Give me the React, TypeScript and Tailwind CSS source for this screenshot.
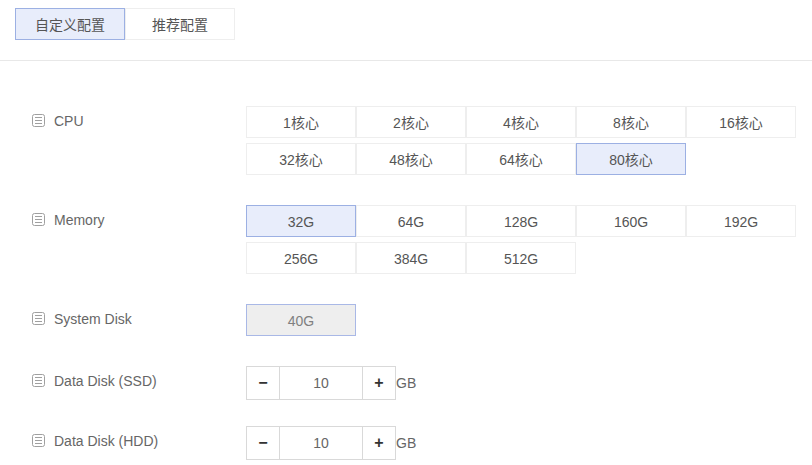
const FONT = "font-['Liberation_Sans','Noto_Sans_CJK_SC',sans-serif]"

function RowIcon() {
  return (
    <svg width="14" height="14" viewBox="0 0 14 14" fill="none" className="shrink-0">
      <rect x="0.5" y="0.5" width="12" height="12" rx="2" stroke="#a0a0a0" />
      <path d="M3 3.5h7M3 6.5h7M3 9.5h7" stroke="#a0a0a0" />
    </svg>
  )
}

function Option({ label, selected }: { label: string; selected?: boolean }) {
  return (
    <button
      className={
        selected
          ? "relative z-10 h-8 w-[110px] border border-[#9cb0e3] bg-[#e8edfb] pt-0.5 text-sm text-[#555]"
          : "h-8 w-[110px] border border-[#eeeeee] bg-white pt-0.5 text-sm text-[#555]"
      }
    >
      {label}
    </button>
  )
}

function Row({
  label,
  children,
  labelClass,
  className,
}: {
  label: string
  children: React.ReactNode
  labelClass?: string
  className?: string
}) {
  return (
    <div className={`flex ${className ?? ""}`}>
      <div className={`flex h-5 w-[246px] items-center gap-2 pl-[32px] text-sm leading-5 text-[#666] ${labelClass ?? ""}`}>
        <RowIcon />
        <span>{label}</span>
      </div>
      {children}
    </div>
  )
}

function Stepper() {
  return (
    <div className="flex items-center">
      <div className="flex h-[34px] w-[150px] border border-[#d9d9d9] text-sm text-[#666]">
        <span className="flex w-8 items-center justify-center text-base font-bold text-[#333]">−</span>
        <span className="flex flex-1 items-center justify-center border-x border-[#d9d9d9]">10</span>
        <span className="flex w-8 items-center justify-center text-base font-bold text-[#333]">+</span>
      </div>
      <span className="text-sm text-[#666]">GB</span>
    </div>
  )
}

export default function App() {
  const cpu = ["1核心", "2核心", "4核心", "8核心", "16核心", "32核心", "48核心", "64核心", "80核心"]
  const memory = ["32G", "64G", "128G", "160G", "192G", "256G", "384G", "512G"]

  return (
    <div className={`h-[465px] w-[812px] overflow-hidden bg-white ${FONT}`}>
      <div className="flex h-[61px] border-b border-[#e8e8e8] pl-[15px] pt-2">
        <Option label="自定义配置" selected />
        <Option label="推荐配置" />
      </div>

      <div className="pt-[45px]">
        <Row label="CPU" className="mb-[30px]" labelClass="mt-[5px]">
          <div className="flex w-[550px] flex-wrap gap-y-[5px]">
            {cpu.map((c) => (
              <Option key={c} label={c} selected={c === "80核心"} />
            ))}
          </div>
        </Row>

        <Row label="Memory" className="mb-[30px]" labelClass="mt-[5px]">
          <div className="flex w-[550px] flex-wrap gap-y-[5px]">
            {memory.map((m) => (
              <Option key={m} label={m} selected={m === "32G"} />
            ))}
          </div>
        </Row>

        <Row label="System Disk" className="mb-[30px]" labelClass="mt-[5px]">
          <button className="h-8 w-[110px] border border-[#a9b8e6] bg-[#eeeeee] pt-0.5 text-sm text-[#808080]">40G</button>
        </Row>

        <Row label="Data Disk (SSD)" className="mb-[26px]" labelClass="mt-[5px]">
          <Stepper />
        </Row>

        <Row label="Data Disk (HDD)" labelClass="mt-[5px]">
          <Stepper />
        </Row>
      </div>
    </div>
  )
}
